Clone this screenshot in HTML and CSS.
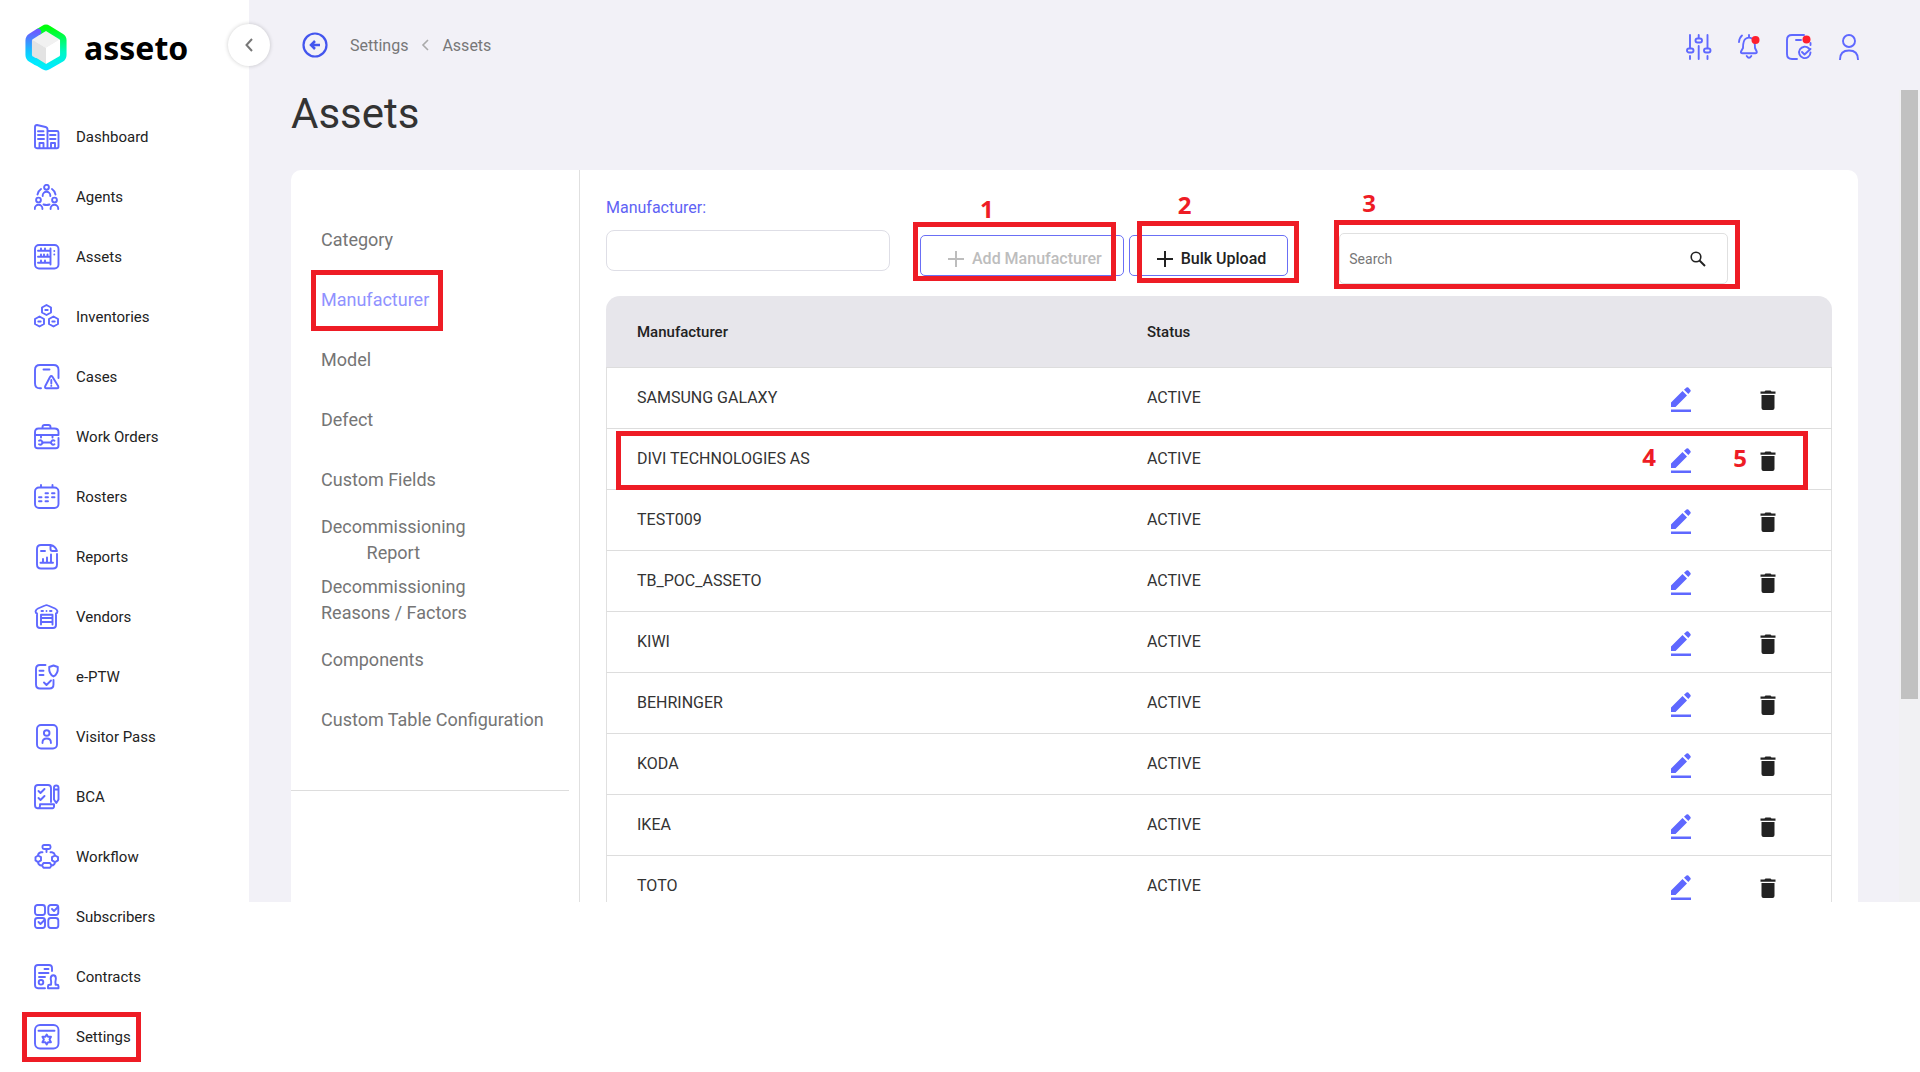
FILE: index.html
```html
<!DOCTYPE html>
<html lang="en">
<head>
  <meta charset="utf-8">
  <title>Asseto - Assets settings</title>
  <link rel="stylesheet" href="styles.css">
</head>
<body>

  <!-- shared row icons -->
  <svg class="sprite" aria-hidden="true">
    <symbol id="pencil" viewBox="0 0 20 26">
      <path fill="#5f68ff" d="M0 15.500 11.500 4 16 8.500 4.500 20H0zM13 2.800 15.500.5Q16.500 0 17.300.600L19.500 3Q20 3.800 19.500 4.600L17.300 6.900zM0 22.500h20v2.500H0z"/>
    </symbol>
    <symbol id="trash" viewBox="0 0 16 20">
      <path fill="#222" d="M.500 1.500H4.500L5.500.500h5l1 1h4v2.200H.500zM1.500 5h13v13q0 2-2 2h-9q-2 0-2-2z"/>
    </symbol>
  </svg>

  <aside class="sidebar">
    <a class="logo" href="#">
      <svg width="42" height="47" viewBox="0 0 42 47">
        <defs>
          <linearGradient id="ringLeft" x1="0" y1="0" x2="0" y2="1">
            <stop offset="0" stop-color="#6a5cff"/><stop offset=".65" stop-color="#12c4ff"/><stop offset="1" stop-color="#00eaff"/>
          </linearGradient>
          <linearGradient id="ringRight" x1="0" y1="0" x2="0" y2="1">
            <stop offset="0" stop-color="#00ff0c"/><stop offset=".6" stop-color="#00f8c0"/><stop offset="1" stop-color="#00eaff"/>
          </linearGradient>
        </defs>
        <path fill="#f1f1f1" d="M21 7 35 15.500 21 24 7 15.500z"/>
        <path fill="#e3e3e3" d="M7 15.500 21 24v17L7 32z"/>
        <path fill="#fff" d="M35 15.500 21 24v17l14-9z"/>
        <g fill="none" stroke-width="6.500" stroke-linecap="round" stroke-linejoin="round">
          <path stroke="url(#ringRight)" d="M14 7.500 19 4.500Q21 3 23 4.500L36 12.500Q38.300 14 38.300 16V31Q38.300 33.500 36 35L23 42.500Q21 44 19 42.500L11 37.500"/>
          <path stroke="url(#ringLeft)" d="M13 8 6 12.500Q3.700 14 3.700 16.500V31Q3.700 33.500 6 35L11 38"/>
        </g>
      </svg>
      <span>asseto</span>
    </a>

    <nav class="menu">
      <a href="#"><svg class="icon" viewBox="0 0 26 26"><path d="M3 1l8.500 2q2 .500 2 2.500V24.200H3q-2 0-2-2V3q0-2 2-2zM13.500 7H23q1.500 0 1.500 1.500v14q0 1.700-1.700 1.700h-9.300M4 7.200h5.500M4 11h6M4 15h6M16 11h5.500M16 15h5.500M5.500 24v-5h4v5M17 24v-5h4v5"/></svg>Dashboard</a>
      <a href="#"><svg class="icon" viewBox="0 0 26 26"><circle cx="12.500" cy="3.300" r="2.400"/><circle cx="4.500" cy="16" r="2.400"/><circle cx="20.500" cy="16" r="2.400"/><path d="M8.700 12v-.5a3.800 3.800 0 0 1 7.600 0v.5M.800 25v-.5a3.800 3.800 0 0 1 7.600 0v.5M16.600 25v-.5a3.800 3.800 0 0 1 7.600 0v.5M3.500 10.500Q4.500 6.500 7 5M18 5q2.500 1.500 3.500 5.500M9.500 20.500q3 1 6 0"/></svg>Agents</a>
      <a href="#"><svg class="icon" viewBox="0 0 26 26"><rect x="1" y="1" width="23.500" height="23.500" rx="4"/><path d="M16.500 4.500v16M4 6.800h12M4 12.800h12M4 18.800h12M7 4.500v2M11 4.500v2M7 10.500v2M10 10.500v2M13.500 10.500v2M7 16.500v2M11 16.500v2M20.300 7v.1M20.300 10.500v.1"/></svg>Assets</a>
      <a href="#"><svg class="icon" viewBox="0 0 26 26"><path d="M12.500 1 17 3.500v5L12.500 11 8 8.500v-5zM5.500 12.500 10 15v5l-4.500 2.500L1 20v-5zM19.500 12.500 24 15v5l-4.500 2.500L15 20v-5zM11.300 6h2.400M4.300 17.500h2.400M18.300 17.500h2.400"/></svg>Inventories</a>
      <a href="#"><svg class="icon" viewBox="0 0 26 26"><path d="M7 24.300H6q-5 0-5-5V6q0-5 5-5h13.500q5 0 5 5v8M9.500 5.500h6M16 13q1.300-2 2.600 0l5.500 9q1 2.300-1.200 2.300H12.500q-2.200 0-1.200-2.300zM17.300 16v3.500M17.300 21.800v.1"/></svg>Cases</a>
      <a href="#"><svg class="icon" viewBox="0 0 26 26"><path d="M8.500 4.500V3q0-2 2-2h4q2 0 2 2v1.500M1 11V8q0-3.500 3.500-3.500h16Q24.500 4.500 24.500 8v3zM1 11v10.500q0 2.800 2.800 2.800h17.900q2.800 0 2.800-2.800V14M7 11v2.500M18.500 11v2.500M8.500 18.500h8"/><path d="M5 16.700a2.200 2.200 0 1 1 0 3.600M20.500 16.700a2.200 2.200 0 1 0 0 3.600"/></svg>Work Orders</a>
      <a href="#"><svg class="icon" viewBox="0 0 26 26"><rect x="1" y="3.500" width="23.500" height="20.500" rx="4"/><path d="M7 1v2M18.500 1v2M11.500 9.300h2.500M18 9.300h2.500M5 13.300h2.500M11.500 13.300h2.500M18 13.300h2.500M5 17.300h2.500M11.500 17.300h2.500"/></svg>Rosters</a>
      <a href="#"><svg class="icon" viewBox="0 0 26 26"><path d="M16 1H7Q3 1 3 5v15.500q0 4 4 4h12q4 0 4-4V10M16.500 1v4q0 2 2 2H23q-1.500-5-6.500-6M7 7h4M6.500 18.700h12.500M9 18.500v-3.500M13 18.500v-5M17 18.500v-8"/></svg>Reports</a>
      <a href="#"><svg class="icon" viewBox="0 0 26 26"><path d="M3 9.500Q1.300 9 1.700 7 2 5.500 4 4.500L11 1.500q1.500-.700 3 0l7 3q2 1 2.300 2.500.400 2-1.300 2.500V21q0 3-3 3H6q-3 0-3-3zM7 20.500v-9.800h11.500v9.800M7 14h11.500M7 18h11.500M7.500 7h1.500M12.500 7v.1M16 7h1.500"/></svg>Vendors</a>
      <a href="#"><svg class="icon" viewBox="0 0 26 26"><path d="M11.500 1H6Q2 1 2 5v15.500q0 4 4 4h9.500q4 0 4-4V16M5.500 6.800h4M5.500 11h4M10 18.500l2.500 2.500 4.500-4.500M19.500 1.500l4.300 1.500q.5 7-4.300 9.500-4.800-2.500-4.300-9.500z"/></svg>e-PTW</a>
      <a href="#"><svg class="icon" viewBox="0 0 26 26"><rect x="3" y="1" width="20" height="23.500" rx="4"/><circle cx="12.700" cy="9" r="2.800"/><path d="M8.500 19v-.5q0-4 4.200-4t4.200 4v.5"/></svg>Visitor Pass</a>
      <a href="#"><svg class="icon" viewBox="0 0 26 26"><path d="M3.500 24.300Q1 24 1 21V4q0-3 3-3h10q3 0 3 3v14M3.500 24.300h15q2-.500 1.500-4H6q.500 4-2.500 4M4.500 7l2 2 4-4M4.500 14l2 2 4-4M20 3.500q0-2 2.200-2t2.300 2v12l-2.200 3.500-2.300-3.500zM20 5.500h4.500"/></svg>BCA</a>
      <a href="#"><svg class="icon" viewBox="0 0 26 26"><rect x="8.500" y="1" width="8" height="4" rx="1.500"/><path d="M12.500 5v3M8.500 8.300H7q-2.500.500-3 3M16.500 8.300H18q2.500.500 3 3M4 18.300q.5 3 3.500 3.200M21 18.300q-.5 3-3.500 3.200M4 11.500l3 1.700v3.200l-3 1.700-2.500-1.700v-3.200zM21 11.500l3 1.700v3.200l-3 1.700-3-1.700v-3.200zM9.500 19h6.500l1.500 2.500-1.500 2.300H9.500L8 21.500z"/></svg>Workflow</a>
      <a href="#"><svg class="icon" viewBox="0 0 26 26"><rect x="1" y="1" width="10" height="10" rx="2.500"/><rect x="14.300" y="1" width="10" height="10" rx="2.500"/><rect x="1" y="14" width="10" height="10" rx="2.500"/><rect x="14.300" y="14" width="10" height="10" rx="2.500"/><path d="M18 5l2 2 4-4M4.500 18l2 2 4-4"/></svg>Subscribers</a>
      <a href="#"><svg class="icon" viewBox="0 0 26 26"><path d="M11 24.300H4Q1 24.300 1 21V4q0-3 3-3h11q3 0 3 3v3M10.500 5h4M5 9h9.500M5 13h6M14 24.300v-2q0-1.500 1.500-1.500h1.500q.5-3-.3-6 0-3.500 2.600-3.500t2.600 3.500q-.8 3-.3 6H23q1.500 0 1.500 1.500v2z"/><circle cx="7" cy="18.300" r="2.300"/></svg>Contracts</a>
      <a href="#"><svg class="icon" viewBox="0 0 26 26"><rect x="1" y="1" width="23.500" height="23.500" rx="5"/><path d="M4.500 6.800h16M12.700 10.500l1.300 2.300h3l-1.500 2.700 1.500 2.700h-3l-1.300 2.300-1.300-2.300h-3l1.500-2.700-1.500-2.700h3z"/></svg>Settings<span class="mark mark-settings"></span></a>
    </nav>
  </aside>

  <main class="main">
    <button class="collapse" aria-label="Collapse menu">
      <svg width="12" height="16" viewBox="0 0 12 16"><path d="M9 2 3.500 8 9 14" fill="none" stroke="#777" stroke-width="2"/></svg>
    </button>

    <header class="topbar">
      <button class="plain" aria-label="Back">
        <svg width="26" height="26" viewBox="0 0 26 26" fill="none" stroke="#4355ee" stroke-width="2.200"><circle cx="13" cy="13" r="11.500"/><path d="M18 13H9.500M13 9l-4 4 4 4" stroke-width="2.500"/></svg>
      </button>
      <nav class="breadcrumb">
        <a href="#">Settings</a>
        <svg width="8" height="12" viewBox="0 0 8 12"><path d="M7 1 2 6l5 5" fill="none" stroke="#aaa" stroke-width="1.600"/></svg>
        <a href="#">Assets</a>
      </nav>
      <div class="tools">
        <button class="plain" aria-label="Filters"><svg class="icon" viewBox="0 0 26 26"><path d="M4 1v13M4 22v3M12.700 1v3M12.700 12v13M21.500 1v13M21.500 22v3"/><rect x="1" y="14.500" width="6.500" height="4" rx="2"/><rect x="9.500" y="4.500" width="6.500" height="4" rx="2"/><rect x="18" y="14.500" width="6.500" height="4" rx="2"/></svg></button>
        <button class="plain" aria-label="Notifications"><svg class="icon" viewBox="0 0 26 26"><path d="M13 1v2M7 14q0-8 3-9.500 3-1.800 6 0 3 1.500 3 9.500l1.700 3.500q.5 1.700-1.500 1.700H6.500q-2 0-1.500-1.700zM10.700 22q2.300 3.500 4.600 0M3 8q.500-4.500 3-6.500"/><circle class="dot" cx="19.500" cy="6" r="4"/></svg></button>
        <button class="plain" aria-label="Tasks"><svg class="icon" viewBox="0 0 26 26"><path d="M11 25H6q-5 0-5-5V6q0-5 5-5h12M10 6h5M24.500 9v2M23 14.500a5.700 5.700 0 1 0 1.500 4M16 18l2.500 2.500L24.500 15"/><circle class="dot" cx="20.500" cy="5.500" r="4"/></svg></button>
        <button class="plain" aria-label="Profile"><svg class="icon" viewBox="0 0 26 26"><circle cx="13" cy="7" r="6"/><path d="M4 25.500q0-9 9-9t9 9"/></svg></button>
      </div>
    </header>

    <div class="scroller">
      <div class="page">
        <h1>Assets</h1>

        <div class="card">
          <nav class="subnav">
            <a href="#">Category</a>
            <a href="#" class="active">Manufacturer<span class="mark mark-nav"></span></a>
            <a href="#">Model</a>
            <a href="#">Defect</a>
            <a href="#">Custom Fields</a>
            <a href="#" class="center">Decommissioning<br>Report</a>
            <a href="#">Decommissioning<br>Reasons / Factors</a>
            <a href="#">Components</a>
            <a href="#">Custom Table Configuration</a>
            <hr>
          </nav>

          <section class="content">
            <div class="toolbar">
              <div class="field">
                <label for="manufacturer">Manufacturer:</label>
                <input type="text" id="manufacturer">
              </div>
              <div class="buttons">
                <div class="step">
                  <button class="btn btn-add" disabled><svg width="16" height="16" viewBox="0 0 16 16"><path d="M8 0v16M0 8h16" stroke="currentColor" stroke-width="2"/></svg>Add Manufacturer</button>
                  <span class="mark mark-add"></span><b class="num num-add">1</b>
                </div>
                <div class="step">
                  <button class="btn"><svg width="16" height="16" viewBox="0 0 16 16"><path d="M8 0v16M0 8h16" stroke="currentColor" stroke-width="2"/></svg>Bulk Upload</button>
                  <span class="mark mark-bulk"></span><b class="num num-bulk">2</b>
                </div>
              </div>
              <div class="search">
                <input type="text" placeholder="Search" aria-label="Search">
                <svg width="16" height="16" viewBox="0 0 16 16" fill="none" stroke="#222"><circle cx="6" cy="6" r="4.800" stroke-width="1.600"/><path d="m9.500 9.500 5.500 5.500" stroke-width="2"/></svg>
                <span class="mark mark-search"></span><b class="num num-search">3</b>
              </div>
            </div>

            <table>
              <thead>
                <tr><th class="col-name">Manufacturer</th><th>Status</th><th class="col-edit"></th><th class="col-del"></th></tr>
              </thead>
              <tbody>
                <tr><td>SAMSUNG GALAXY</td><td>ACTIVE</td><td><button class="plain" aria-label="Edit"><svg width="20" height="26"><use href="#pencil"/></svg></button></td><td><button class="plain" aria-label="Delete"><svg width="16" height="20"><use href="#trash"/></svg></button></td></tr>
                <tr class="marked"><td>DIVI TECHNOLOGIES AS<span class="mark mark-row"></span></td><td>ACTIVE</td><td><b class="num num-edit">4</b><button class="plain" aria-label="Edit"><svg width="20" height="26"><use href="#pencil"/></svg></button></td><td><b class="num num-del">5</b><button class="plain" aria-label="Delete"><svg width="16" height="20"><use href="#trash"/></svg></button></td></tr>
                <tr><td>TEST009</td><td>ACTIVE</td><td><button class="plain" aria-label="Edit"><svg width="20" height="26"><use href="#pencil"/></svg></button></td><td><button class="plain" aria-label="Delete"><svg width="16" height="20"><use href="#trash"/></svg></button></td></tr>
                <tr><td>TB_POC_ASSETO</td><td>ACTIVE</td><td><button class="plain" aria-label="Edit"><svg width="20" height="26"><use href="#pencil"/></svg></button></td><td><button class="plain" aria-label="Delete"><svg width="16" height="20"><use href="#trash"/></svg></button></td></tr>
                <tr><td>KIWI</td><td>ACTIVE</td><td><button class="plain" aria-label="Edit"><svg width="20" height="26"><use href="#pencil"/></svg></button></td><td><button class="plain" aria-label="Delete"><svg width="16" height="20"><use href="#trash"/></svg></button></td></tr>
                <tr><td>BEHRINGER</td><td>ACTIVE</td><td><button class="plain" aria-label="Edit"><svg width="20" height="26"><use href="#pencil"/></svg></button></td><td><button class="plain" aria-label="Delete"><svg width="16" height="20"><use href="#trash"/></svg></button></td></tr>
                <tr><td>KODA</td><td>ACTIVE</td><td><button class="plain" aria-label="Edit"><svg width="20" height="26"><use href="#pencil"/></svg></button></td><td><button class="plain" aria-label="Delete"><svg width="16" height="20"><use href="#trash"/></svg></button></td></tr>
                <tr><td>IKEA</td><td>ACTIVE</td><td><button class="plain" aria-label="Edit"><svg width="20" height="26"><use href="#pencil"/></svg></button></td><td><button class="plain" aria-label="Delete"><svg width="16" height="20"><use href="#trash"/></svg></button></td></tr>
                <tr><td>TOTO</td><td>ACTIVE</td><td><button class="plain" aria-label="Edit"><svg width="20" height="26"><use href="#pencil"/></svg></button></td><td><button class="plain" aria-label="Delete"><svg width="16" height="20"><use href="#trash"/></svg></button></td></tr>
              </tbody>
            </table>
          </section>
        </div>
      </div>
      <div class="scrollbar"><div class="thumb"></div></div>
    </div>
  </main>

</body>
</html>
```

FILE: styles.css
```css
* { box-sizing: border-box; }
body {
  margin: 0;
  display: flex;
  align-items: flex-start;
  background: #fff;
  color: #222;
  font-family: Roboto, "Liberation Sans", sans-serif;
  font-size: 16px;
}
a { color: inherit; text-decoration: none; }
button, input { font-family: inherit; }
.sprite { position: absolute; width: 0; height: 0; }
.icon {
  width: 26px;
  height: 26px;
  flex: none;
  fill: none;
  stroke: #5f68ff;
  stroke-width: 1.9;
  stroke-linecap: round;
  stroke-linejoin: round;
}
.icon .dot { fill: #ff1f2d; stroke: none; }
.plain {
  display: block;
  padding: 0;
  border: 0;
  background: none;
  cursor: pointer;
}
.plain svg { display: block; }

/* sidebar */
.sidebar { width: 249px; flex: none; }
.logo {
  display: flex;
  align-items: center;
  gap: 17px;
  height: 107px;
  padding: 0 0 12px 25px;
  color: #000;
  font: bold 32px "Noto Sans", sans-serif;
}
.menu a {
  position: relative;
  display: flex;
  align-items: center;
  gap: 16px;
  height: 60px;
  padding-left: 34px;
  font-size: 15px;
  line-height: 20px;
}

/* main area */
.main {
  position: relative;
  flex: 1;
  min-width: 0;
  height: calc(100vh - 170px);
  display: flex;
  flex-direction: column;
  background: #f2f1f7;
}
.collapse {
  position: absolute;
  left: -21px;
  top: 24px;
  width: 42px;
  height: 42px;
  padding: 0;
  display: flex;
  align-items: center;
  justify-content: center;
  border: 0;
  border-radius: 50%;
  background: #fff;
  box-shadow: 0 0 4px rgba(0, 0, 0, .2);
}
.topbar {
  flex: none;
  display: flex;
  align-items: center;
  height: 90px;
  padding: 0 58px 0 53px;
}
.breadcrumb {
  display: flex;
  align-items: center;
  gap: 13px;
  margin-left: 22px;
  color: #777;
}
.tools {
  display: flex;
  gap: 24px;
  margin-left: auto;
  padding-top: 3px;
}
.scroller {
  flex: 1;
  min-height: 0;
  display: flex;
  overflow: hidden;
}
.page {
  flex: 1;
  min-width: 0;
  padding: 0 41px 0 42px;
}
.scrollbar { width: 21px; padding: 0 2px; background: #f1f1f3; }
.thumb { height: 75%; background: #c1c1c1; }
h1 {
  margin: 0 0 32px;
  font-size: 42px;
  font-weight: 400;
  line-height: 48px;
  color: #333;
}
.card {
  display: flex;
  min-height: 100%;
  background: #fff;
  border-radius: 10px;
}

/* settings list */
.subnav {
  flex: none;
  width: 289px;
  padding-top: 40px;
  border-right: 1px solid #e0e0e0;
  color: #757575;
  font-size: 18px;
  line-height: 26px;
}
.subnav a {
  position: relative;
  display: flex;
  align-items: center;
  width: max-content;
  height: 60px;
  margin-left: 30px;
}
.subnav .active { color: #9092ff; }
.subnav .center { text-align: center; }
.subnav hr {
  margin: 40px 10px 0 0;
  border: 0;
  border-top: 1px solid #ddd;
}

/* toolbar */
.content { flex: 1; min-width: 0; padding: 26px 26px 0; }
.toolbar {
  display: flex;
  align-items: flex-start;
  margin-bottom: 12px;
}
.field { width: 284px; margin-right: 30px; }
.field label {
  display: block;
  margin-bottom: 10px;
  line-height: 24px;
  color: #5f63f5;
}
.field input {
  display: block;
  width: 100%;
  height: 41px;
  border: 1px solid #dedee6;
  border-radius: 8px;
  font-size: 16px;
}
.buttons { display: flex; gap: 5px; margin-top: 39px; }
.step { position: relative; }
.btn {
  display: flex;
  align-items: center;
  gap: 8px;
  height: 41px;
  padding: 6px 21px 0 27px;
  border: 1px solid #6a6ff5;
  border-radius: 5px;
  background: #fff;
  color: #222;
  font-size: 16px;
  font-weight: 500;
}
.btn-add { color: #bdbdbd; }
.search {
  position: relative;
  display: flex;
  align-items: center;
  width: 389px;
  height: 51px;
  margin: 37px 0 0 51px;
  padding: 0 21px 0 9px;
  border: 1px solid #e0e0e0;
  border-radius: 5px;
}
.search input {
  flex: 1;
  min-width: 0;
  padding: 0;
  border: 0;
  outline: 0;
  font-size: 14px;
}
.search input::placeholder { color: #777; }

/* table */
table {
  width: 100%;
  table-layout: fixed;
  border-collapse: separate;
  border-spacing: 0;
}
th, td {
  padding: 0 0 0 31px;
  border-bottom: 1px solid #ddd;
  text-align: left;
}
th {
  height: 72px;
  background: #e7e6eb;
  font-size: 15px;
  font-weight: 500;
}
th:first-child { border-top-left-radius: 14px; }
th:last-child { border-top-right-radius: 14px; }
td { height: 61px; padding-bottom: 2px; color: #333; }
td:first-child { padding-left: 30px; border-left: 1px solid #e0e0e0; }
td:nth-child(n+3) { padding: 3px 0 0; }
td:last-child { border-right: 1px solid #e0e0e0; }
td .plain { margin: 0 auto; }
.col-name { width: 510px; }
.col-edit { width: 46px; }
.col-del { width: 128px; }
.marked { position: relative; }

/* guide boxes and step numbers over the controls */
.mark {
  position: absolute;
  border: 5px solid #ee1c25;
  pointer-events: none;
}
.mark-settings { left: 22px; top: 5px; width: 119px; height: 50px; }
.mark-nav { inset: 0 -14px -1px -10px; }
.mark-add { inset: -13px 8px -5px -7px; }
.mark-bulk { inset: -14px -11px -7px 8px; }
.mark-search { inset: -14px -13px -6px -6px; }
.mark-row { inset: 2px 24px 0 10px; }
.num {
  position: absolute;
  color: #ee1c25;
  font: bold 24px/28px "Open Sans", sans-serif;
}
.num-add { left: 60px; top: -40px; }
.num-bulk { left: 49px; top: -44px; }
.num-search { left: 22px; top: -45px; }
.num-edit { right: 176px; top: 14px; }
.num-del { right: 85px; top: 15px; }
```
